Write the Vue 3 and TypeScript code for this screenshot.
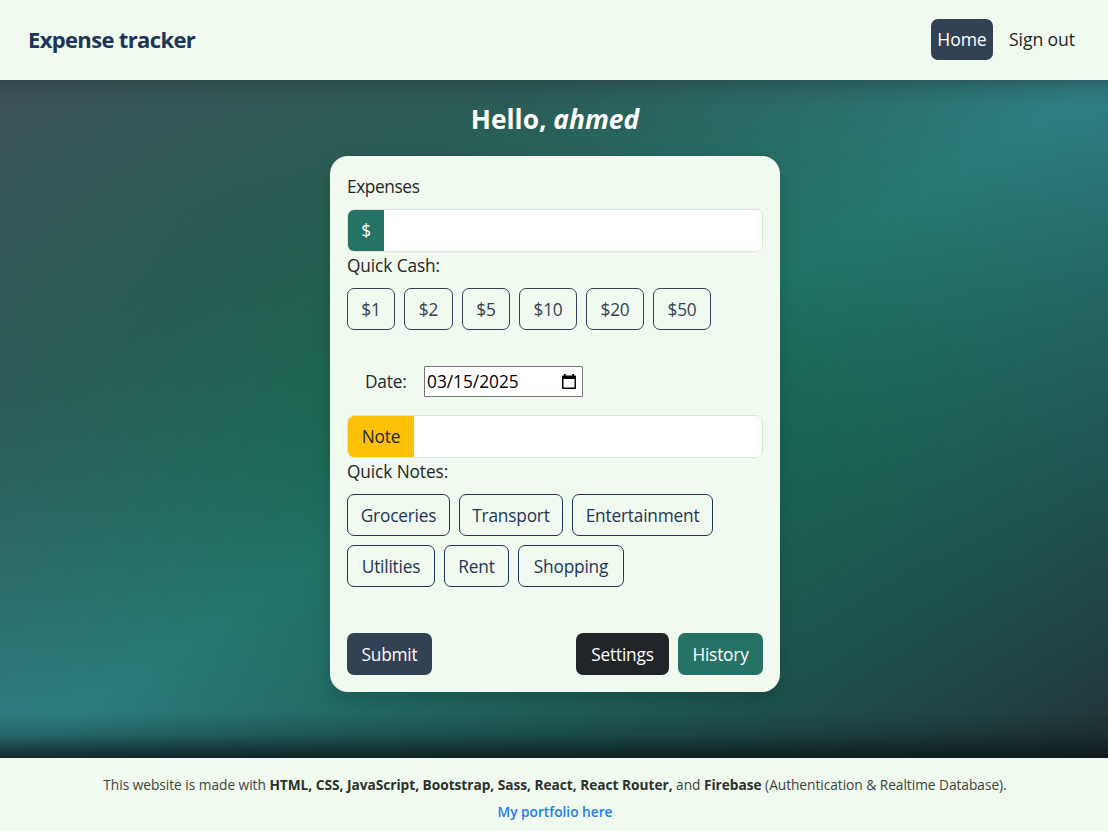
<script setup lang="ts">
const cash: { label: string; cls: string }[] = [
  { label: '$1', cls: 'w48' },
  { label: '$2', cls: 'w49' },
  { label: '$5', cls: 'w48' },
  { label: '$10', cls: 'w58' },
  { label: '$20', cls: 'w58' },
  { label: '$50', cls: 'w58' },
]
const notes: { label: string; cls: string }[] = [
  { label: 'Groceries', cls: 'w103' },
  { label: 'Transport', cls: 'w104' },
  { label: 'Entertainment', cls: 'w141' },
  { label: 'Utilities', cls: 'w88' },
  { label: 'Rent', cls: 'w65' },
  { label: 'Shopping', cls: 'w106' },
]
</script>

<template>
  <div class="page">
    <header class="bar">
      <a class="brand">Expense tracker</a>
      <nav class="nav">
        <a class="nav-link active">Home</a>
        <a class="nav-link out">Sign out</a>
      </nav>
    </header>
    <main class="main">
      <h1 class="hello">Hello, <em>ahmed</em></h1>
      <section class="card">
        <label class="label">Expenses</label>
        <div class="group"><span class="addon money">$</span><input class="field" /></div>
        <p class="caption">Quick Cash:</p>
        <div class="chips">
          <button v-for="c in cash" :key="c.label" class="btn outline cash" :class="c.cls">{{ c.label }}</button>
        </div>
        <div class="date-row">
          <span class="date-label">Date:</span>
          <div class="date">
            <span class="date-value">03/15/2025</span>
            <svg width="14" height="15" viewBox="0 0 14 15">
              <path d="M2 0h1.700v1.400h6.600V0H12v1.400h1a1 1 0 0 1 1 1V14a1 1 0 0 1-1 1H1a1 1 0 0 1-1-1V2.400a1 1 0 0 1 1-1h1zM1.500 5v8.500h11V5z" fill="#000" fill-rule="evenodd" />
            </svg>
          </div>
        </div>
        <div class="group"><span class="addon note">Note</span><input class="field" /></div>
        <p class="caption">Quick Notes:</p>
        <div class="chips">
          <button v-for="n in notes" :key="n.label" class="btn outline navy" :class="n.cls">{{ n.label }}</button>
        </div>
        <div class="actions">
          <button class="btn submit">Submit</button>
          <div class="right">
            <button class="btn settings">Settings</button>
            <button class="btn history">History</button>
          </div>
        </div>
      </section>
    </main>
    <footer class="foot">
      <p class="made">This website is made with <b>HTML, CSS, JavaScript, Bootstrap, Sass, React, React Router,</b> and <b>Firebase</b> (Authentication &amp; Realtime Database).</p>
      <a class="portfolio">My portfolio here</a>
    </footer>
  </div>
</template>

<style>
body { margin: 0; overflow: hidden; }
</style>
<style scoped>
* { box-sizing: border-box; }
.page {
  width: 1108px; height: 831px; display: flex; flex-direction: column;
  font-family: "Segoe UI", "Open Sans", "Noto Sans", sans-serif;
  font-size: 17.3px; line-height: 26.4px; color: #212529; letter-spacing: -0.2px; white-space: nowrap;
}
.bar {
  height: 80px; background: #f1faee; display: flex; align-items: center;
  justify-content: space-between; padding: 0 26px 1px 28px; flex: none;
}
.brand { font-size: 22px; font-weight: 700; color: #1d3557; letter-spacing: -0.65px; }
.nav { display: flex; gap: 9px; }
.nav-link { height: 41px; line-height: 41px; border-radius: 7px; text-align: center; font-size: 17.6px; letter-spacing: -0.1px; }
.active { width: 62px; background: #334155; color: #fff; }
.out { width: 80px; }
.main {
  height: 678px; flex: none; overflow: hidden;
  display: flex; flex-direction: column; align-items: center; padding-left: 2px;
  background:
    linear-gradient(180deg, rgba(32, 50, 52, 0.36), rgba(32, 50, 52, 0.12) 12px, transparent 28px),
    linear-gradient(0deg, rgba(10, 20, 24, 0.8), rgba(10, 20, 24, 0.62) 8px, rgba(10, 20, 24, 0.22) 24px, transparent 46px),
    radial-gradient(rgba(0, 86, 34, 0.6), rgba(0, 86, 34, 0) 102%),
    linear-gradient(to bottom right, #3f535a, #375f66 25%, #308289 50%, #285963 75%, #223036);
}
.hello {
  margin: 19px 0 17px; height: 40px; line-height: 40px;
  font-size: 26.4px; font-weight: 700; color: #fff; letter-spacing: 0;
}
.card {
  width: 450px; height: 536px; flex: none; background: #f1faee;
  border-radius: 18px; padding: 17px; box-shadow: 0 8px 18px rgba(0, 0, 0, 0.15);
}
.label { display: block; height: 26px; margin-bottom: 10px; line-height: 28px; letter-spacing: -0.4px; }
.group {
  display: flex; height: 43px; border: 1px solid #dbe3de; border-radius: 7px;
  background: #fff; overflow: hidden;
}
.addon { flex: none; text-align: center; line-height: 42px; }
.money { width: 36px; background: #247364; color: #fff; line-height: 41px; }
.note { width: 66px; background: #ffc107; }
.field { flex: 1; min-width: 0; border: 0; outline: 0; background: #fff; }
.caption { margin: 1px 0 9px; height: 26px; line-height: 26px; letter-spacing: -0.1px; }
.chips { display: flex; flex-wrap: wrap; gap: 9px; }
.btn {
  height: 42px; padding: 2px 0 0; border: 0; border-radius: 7px; font: inherit;
  letter-spacing: inherit; color: #fff; text-align: center; flex: none;
}
.outline { border: 1px solid; background: transparent; }
.cash { color: #334155; }
.navy { color: #1d3557; }
.w48 { width: 48px; }
.w49 { width: 49px; }
.w58 { width: 58px; }
.w65 { width: 65px; }
.w88 { width: 88px; }
.w103 { width: 103px; }
.w104 { width: 104px; }
.w106 { width: 106px; }
.w141 { width: 141px; }
.date-row { display: flex; align-items: center; margin: 36px 0 18px 18px; height: 31px; line-height: 30px; }
.date-label { width: 59px; }
.date {
  width: 159px; height: 31px; border: 1px solid #767676; border-radius: 1px; background: #fff; color: #000;
  display: flex; align-items: center; justify-content: space-between; padding: 0 6px 0 2px;
}
.date-value { letter-spacing: 0; }
.actions { display: flex; justify-content: space-between; margin-top: 46px; }
.right { display: flex; gap: 9px; }
.submit { width: 85px; background: #334155; }
.settings { width: 93px; background: #212529; }
.history { width: 85px; background: #247364; }
.foot {
  height: 73px; flex: none; background: #f1faee; text-align: center;
  font-size: 13.7px; padding: 13px 0 0 2px; color: #3c423e;
}
.made { margin: 0; height: 27px; line-height: 27px; letter-spacing: -0.02px; }
.made b { color: #2b302d; }
.portfolio { display: block; line-height: 27px; font-weight: 600; color: #1f7cf0; letter-spacing: 0; }
</style>
